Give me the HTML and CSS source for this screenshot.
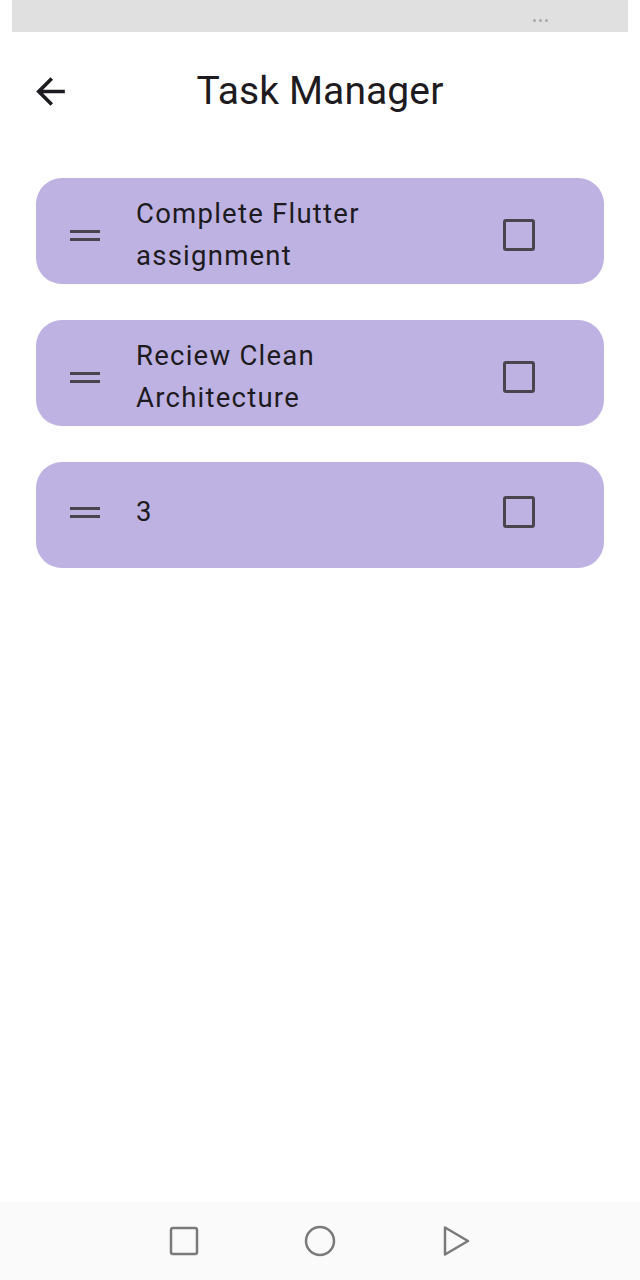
FILE: index.html
```html
<!DOCTYPE html>
<html>
<head>
<meta charset="utf-8">
<link rel="stylesheet" href="styles.css">
</head>
<body>
<div class="screen">
  <div class="statusbar"><span class="dots"><i></i><i></i><i></i></span></div>
  <header class="appbar">
    <button class="back" aria-label="Back">
      <svg width="43" height="43" viewBox="0 0 24 24"><path d="M20 11H7.83l5.59-5.59L12 4l-8 8 8 8 1.41-1.41L7.83 13H20v-2z" fill="#1d1b20"/></svg>
    </button>
    <h1 class="title">Task Manager</h1>
  </header>
  <main class="list">
    <div class="card card-tall">
      <span class="handle"><i></i><i></i></span>
      <span class="label">Complete Flutter assignment</span>
      <span class="check"></span>
    </div>
    <div class="card card-tall">
      <span class="handle"><i></i><i></i></span>
      <span class="label">Reciew Clean Architecture</span>
      <span class="check"></span>
    </div>
    <div class="card card-short">
      <span class="handle"><i></i><i></i></span>
      <span class="label">3</span>
      <span class="check"></span>
    </div>
  </main>
  <nav class="navbar">
    <svg width="32" height="32" viewBox="0 0 32 32"><rect x="3" y="3" width="26" height="26" rx="2" fill="none" stroke="#7a7a7a" stroke-width="2.5"/></svg>
    <svg width="34" height="34" viewBox="0 0 34 34"><circle cx="17" cy="17" r="14" fill="none" stroke="#7a7a7a" stroke-width="2.5"/></svg>
    <svg width="32" height="34" viewBox="0 0 32 34"><path d="M5 3.5 L28 17 L5 30.5 Z" fill="none" stroke="#7a7a7a" stroke-width="2.5" stroke-linejoin="round"/></svg>
  </nav>
</div>
</body>
</html>
```
FILE: styles.css
```css
* { box-sizing: border-box; }
html, body { margin: 0; padding: 0; background: #fff; }
body { font-family: Roboto, "Noto Sans", sans-serif; color: #1d1b20; }
.screen { width: 640px; height: 1280px; display: flex; flex-direction: column; }
.statusbar {
  height: 32px; margin: 0 12px; background: #e0e0e0;
  display: flex; justify-content: flex-end; align-items: flex-end;
  padding: 0 80px 10px 0;
}
.dots { display: flex; gap: 3px; }
.dots i { width: 3px; height: 3px; border-radius: 50%; background: #a8a8a8; display: block; }
.appbar {
  height: 120px; display: flex; align-items: center; position: relative;
  padding: 0 0 2px 29px;
}
.back { border: 0; background: none; padding: 0; width: 43px; height: 43px; display: flex; }
.title {
  margin: 0; font-weight: 400; font-size: 39px; letter-spacing: 0.1px; line-height: 46px;
  position: absolute; left: 0; right: 0; top: 36px; text-align: center; pointer-events: none;
}
.list { display: flex; flex-direction: column; gap: 36px; padding: 26px 36px 0; flex: 1; }
.card {
  height: 106px; border-radius: 26px; background: #beb2e3;
  display: flex; align-items: center; padding: 0 69px 0 34px;
}
.card-tall { padding-top: 8px; }
.card-short { padding-bottom: 6px; }
.handle { width: 30px; display: flex; flex-direction: column; gap: 5px; }
.handle i { display: block; height: 3px; background: #49454f; }
.label {
  flex: 1; margin-left: 36px; font-size: 27.5px; line-height: 42px; letter-spacing: 1.25px;
  padding-right: 110px;
}
.check {
  width: 32px; height: 32px; border: 3px solid #49454f; border-radius: 3px;
}
.navbar {
  height: 78px; background: #fafafa; display: flex; align-items: center; justify-content: center;
  gap: 103px;
}
```
